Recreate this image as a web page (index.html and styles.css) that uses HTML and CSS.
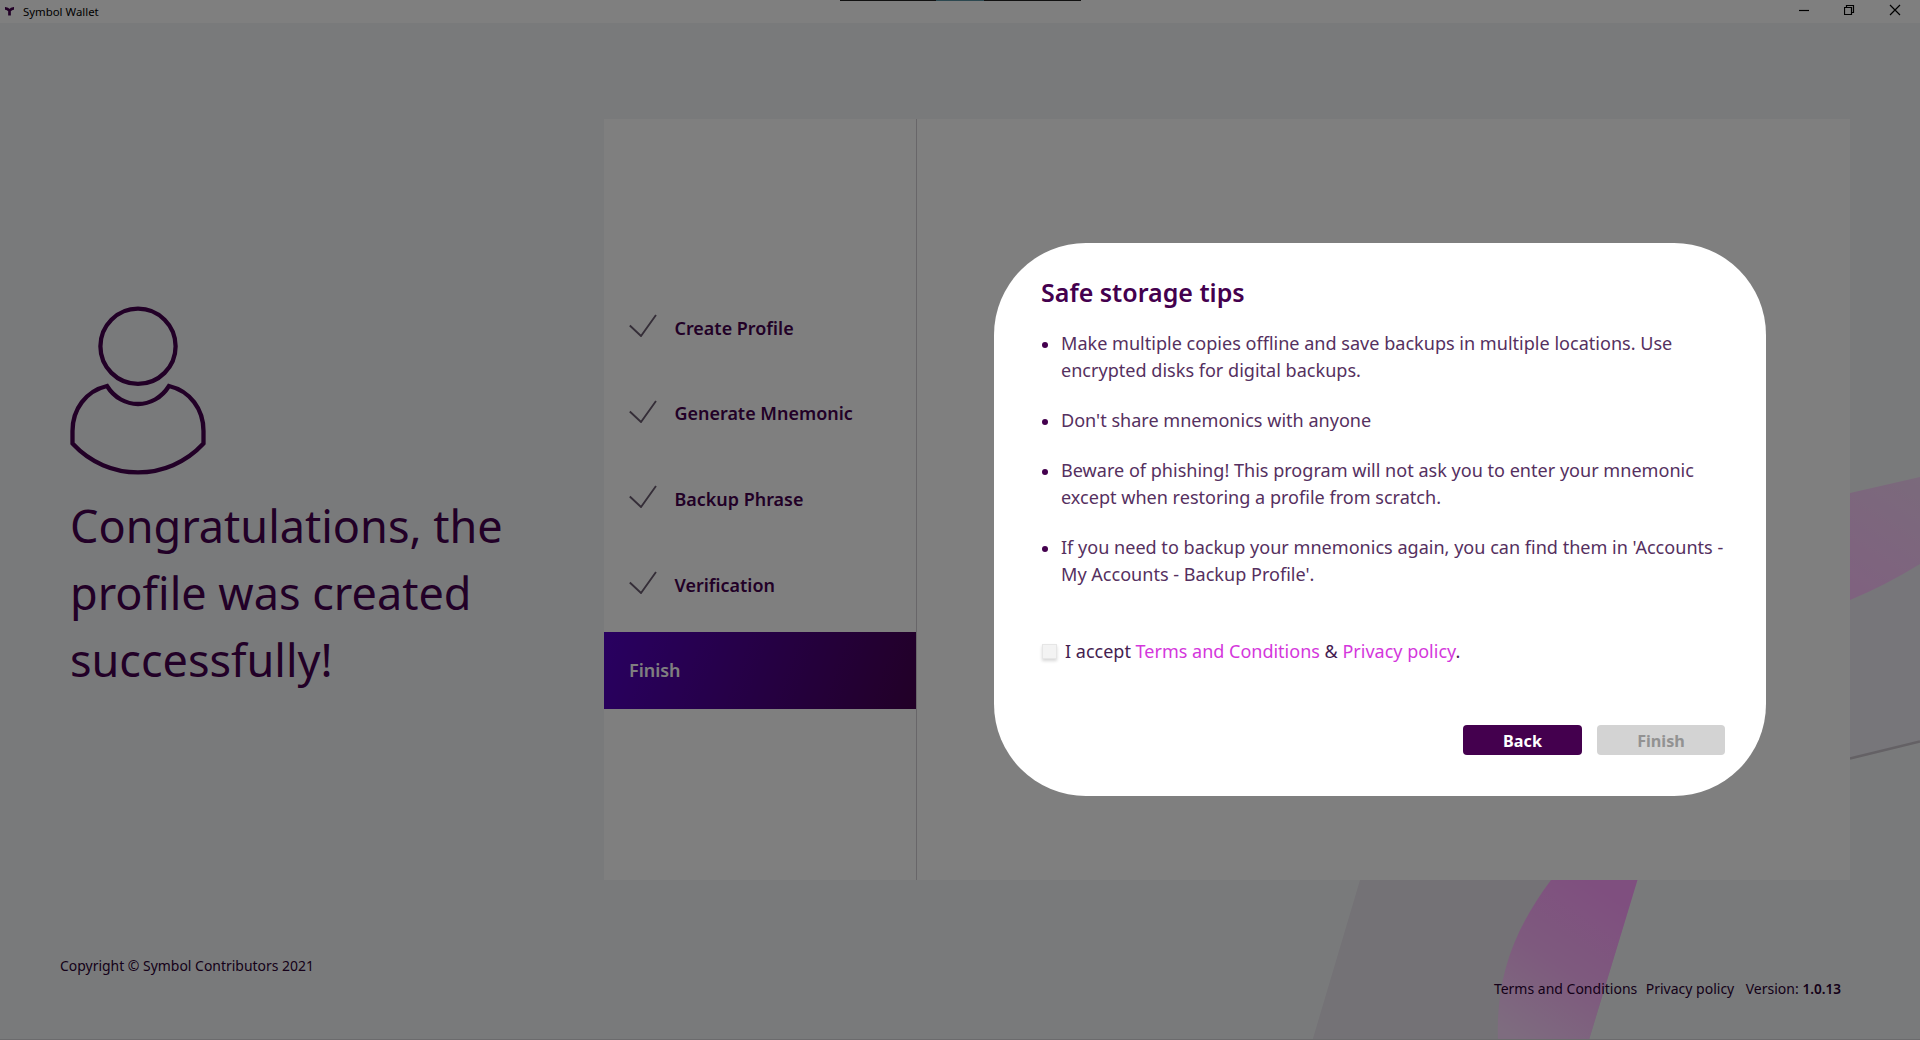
FILE: index.html
```
<!DOCTYPE html>
<html lang="en">
<head>
<meta charset="utf-8">
<title>Symbol Wallet</title>
<link rel="stylesheet" href="styles.css">
</head>
<body>
<div class="window">
  <svg class="backdrop" viewBox="0 0 1920 1040" aria-hidden="true">
    <defs>
      <linearGradient id="ribbon" gradientUnits="userSpaceOnUse" x1="1600" y1="890" x2="1505" y2="1030">
        <stop offset="0" stop-color="#ff9fff"/>
        <stop offset="0.5" stop-color="#fcb4fc"/>
        <stop offset="1" stop-color="#fcd8ff"/>
      </linearGradient>
      <linearGradient id="ribbon-side" gradientUnits="userSpaceOnUse" x1="1850" y1="590" x2="1920" y2="480">
        <stop offset="0" stop-color="#ffc4ff"/>
        <stop offset="1" stop-color="#f6d4f8"/>
      </linearGradient>
    </defs>
    <path d="M1360 880H1637L1589 1040H1312.500Z" fill="#e8e4ec"/>
    <path d="M1551 880H1637.500L1589 1040H1498C1496 985 1509 936 1551 880Z" fill="url(#ribbon)"/>
    <path d="M1850 590L1920 555V741L1850 758Z" fill="#eeecf4"/>
    <path d="M1850 493L1920 477V564Q1886 585 1850 600Z" fill="url(#ribbon-side)"/>
    <path d="M1850 758.500L1920 741.500" stroke="#c8c2ca" stroke-width="2.500"/>
  </svg>

  <header class="titlebar">
    <svg class="logo" width="11" height="11" viewBox="0 0 11 11"><path d="M1 2.300Q3.500 2.200 5.500 4.700Q7.500 2.200 10 2.300M5.500 4.500V9.500" fill="none" stroke="#44004e" stroke-width="2.700"/></svg>
    <span class="app-name">Symbol Wallet</span>
    <div class="controls">
      <svg width="12" height="12" viewBox="0 0 12 12"><path d="M1 6.500H11"/></svg>
      <svg width="12" height="12" viewBox="0 0 12 12"><path d="M.5 3.500H7.500V10.500H.5ZM2.500 3.500V1.500H9.500V8.500H7.500"/></svg>
      <svg width="12" height="12" viewBox="0 0 12 12"><path d="M1 1L11 11M11 1L1 11"/></svg>
    </div>
  </header>

  <main class="main">
    <section class="intro">
      <svg class="profile-icon" width="140" height="172" viewBox="0 0 140 172">
        <circle cx="68" cy="41.300" r="37.600"/>
        <path d="M37 81C16 86 2.500 104 2.500 126V138.500C38 177 98 177 133.500 138.500V126C133.500 104 120 86 99 81C84 105 52 105 37 81Z"/>
      </svg>
      <h1>Congratulations, the profile was created successfully!</h1>
    </section>
    <section class="card">
      <ol class="steps">
        <li><svg viewBox="0 0 28 23"><path d="M.8 11.500L12 22L27 1"/></svg>Create Profile</li>
        <li><svg viewBox="0 0 28 23"><path d="M.8 11.500L12 22L27 1"/></svg>Generate Mnemonic</li>
        <li><svg viewBox="0 0 28 23"><path d="M.8 11.500L12 22L27 1"/></svg>Backup Phrase</li>
        <li><svg viewBox="0 0 28 23"><path d="M.8 11.500L12 22L27 1"/></svg>Verification</li>
        <li class="active">Finish</li>
      </ol>
    </section>
  </main>

  <footer class="footer">
    <span class="copyright">Copyright © Symbol Contributors 2021</span>
    <nav><span class="link-terms">Terms and Conditions</span><span class="link-privacy">Privacy policy</span><span>Version: <b>1.0.13</b></span></nav>
  </footer>

  <div class="scrim">
    <div class="edge"></div>
    <div class="modal">
      <h2>Safe storage tips</h2>
      <ul>
        <li>Make multiple copies offline and save backups in multiple locations. Use<br>encrypted disks for digital backups.</li>
        <li>Don't share mnemonics with anyone</li>
        <li>Beware of phishing! This program will not ask you to enter your mnemonic<br>except when restoring a profile from scratch.</li>
        <li>If you need to backup your mnemonics again, you can find them in 'Accounts -<br>My Accounts - Backup Profile'.</li>
      </ul>
      <div class="accept"><span class="checkbox"></span><span>I accept <a>Terms and Conditions</a> &amp; <a>Privacy policy</a>.</span></div>
      <div class="actions"><button class="back">Back</button><button class="finish" disabled>Finish</button></div>
    </div>
  </div>
</div>
</body>
</html>
```
FILE: styles.css
```
* { box-sizing: border-box; }
body { margin: 0; font-family: "Noto Sans", sans-serif; color: #44004e; }
h1, h2, ul, ol { margin: 0; padding: 0; font-weight: 400; list-style: none; }

.window { position: relative; width: 1920px; height: 1040px; overflow: hidden; background: #f3f5f7; display: flex; flex-direction: column; border-bottom: 1px solid #6b6b6d; }
.backdrop { position: absolute; inset: 0; width: 1920px; height: 1040px; }

.titlebar { position: relative; height: 23px; flex: none; background: #fff; display: flex; align-items: center; padding: 0 19px 0 4px; }
.logo { margin-right: 8px; }
.app-name { font-size: 11.4px; line-height: 16px; color: #000; }
.controls { margin-left: auto; margin-top: -3px; display: flex; gap: 33.500px; }
.controls svg { fill: none; stroke: #000; stroke-width: 1.2; }

.main { position: relative; display: flex; padding: 96px 70px 0; height: 857px; flex: none; }
.intro { width: 534px; padding-top: 186px; }
.profile-icon { display: block; fill: none; stroke: #44004e; stroke-width: 4.300; }
.intro h1 { width: 460px; margin-top: 14.500px; font-size: 45px; line-height: 67px; }
.card { width: 1246px; height: 761px; background: #fff; display: flex; }
.steps { width: 313px; border-right: 1px solid #d0cdd2; padding-top: 170.500px; display: flex; flex-direction: column; gap: 8.700px; }
.steps li { height: 77px; padding-left: 25px; padding-bottom: 1px; display: flex; align-items: center; font-size: 17.950px; font-weight: 600; }
.steps svg { width: 28px; height: 23px; margin: -4px 17.500px 0 0; fill: none; stroke: #6a5c70; stroke-width: 1.9; }
.steps .active { color: #fff; background: linear-gradient(110deg, #5200c2, #44004e); }

.footer { position: relative; flex: 1; display: flex; justify-content: space-between; align-items: flex-start; padding: 76px 79px 0 60px; font-size: 13.950px; line-height: 20px; color: #2a0032; }
.footer nav { padding-top: 23px; font-size: 14px; display: flex; }
.link-terms { margin-right: 8.500px; }
.link-privacy { margin-right: 11.500px; }
.footer b { font-weight: 600; font-size: 13.600px; }

.scrim { position: absolute; inset: 0; height: 1040px; background: rgba(0, 0, 0, .5); padding: 243px 0 0 994px; }
.edge { position: absolute; top: 0; left: 840px; width: 241px; height: 1px; background: linear-gradient(90deg, #111 96px, #2c4850 96px, #2c4850 144px, #111 144px); }
.modal { width: 772px; height: 553px; border-radius: 92px; background: #fff; padding: 31px 41px 0 47px; }
.modal h2 { font-size: 25px; line-height: 36px; font-weight: 600; }
.modal ul { margin-top: 20px; display: flex; flex-direction: column; gap: 23px; color: #553060; }
.modal li { position: relative; padding-left: 20px; font-size: 18.070px; line-height: 27px; white-space: nowrap; }
.modal li::before { content: ""; position: absolute; left: .5px; top: 11.500px; width: 6.500px; height: 6.500px; border-radius: 50%; background: #44004e; }
.accept { margin-top: 50px; height: 27px; display: flex; align-items: center; gap: 8px; font-size: 18px; line-height: 27px; color: #442050; }
.accept a { color: #d437dc; }
.checkbox { width: 15px; height: 15px; margin-left: 1px; background: #f3f3f3; border: 1px solid #e6e6e6; box-shadow: 0 2px 3px rgba(0, 0, 0, .16); }
.actions { margin-top: 60px; display: flex; justify-content: flex-end; gap: 15px; }
.actions button { height: 30px; border: 0; border-radius: 4px; padding: 2px 0 0; font: 700 16.200px/24px "Noto Sans", sans-serif; }
.back { width: 119px; background: #44004e; color: #fff; }
.finish { width: 128px; background: #d3d3d3; color: #929292; }
```
